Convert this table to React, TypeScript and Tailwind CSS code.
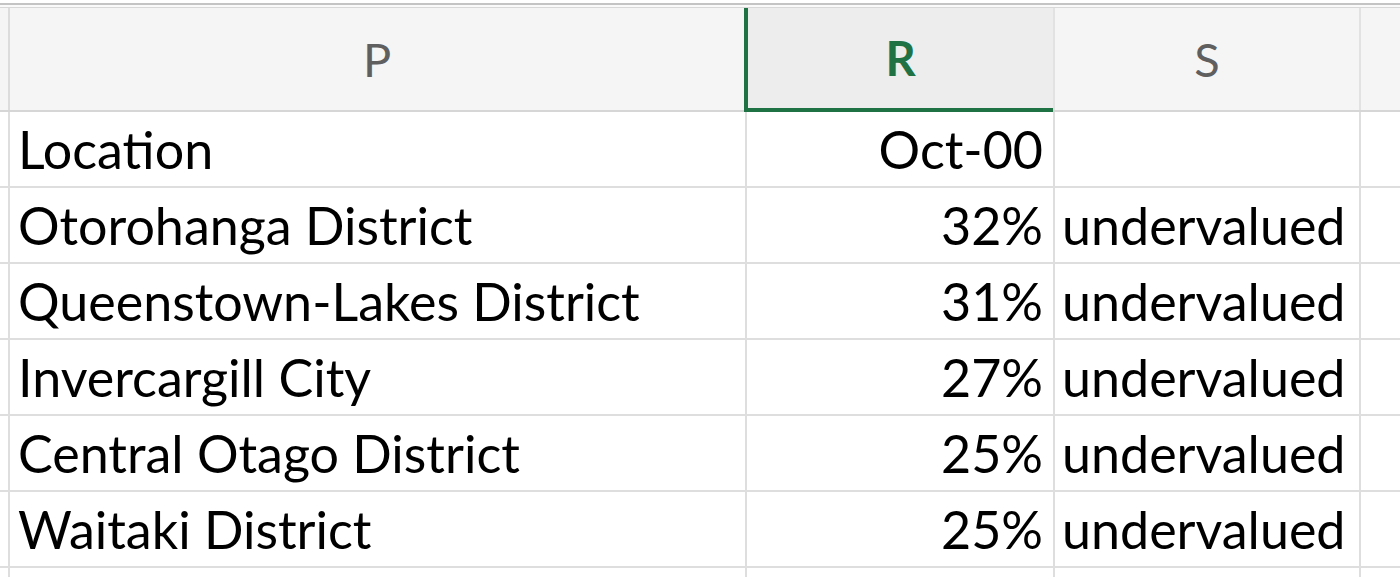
import React from "react";

// spreadsheet excerpt: columns P, R, S
const rows = [
  { loc: "Otorohanga District", pct: "32%" },
  { loc: "Queenstown-Lakes District", pct: "31%" },
  { loc: "Invercargill City", pct: "27%" },
  { loc: "Central Otago District", pct: "25%" },
  { loc: "Waitaki District", pct: "25%" },
];

const font = { fontFamily: "Lato, 'Open Sans', sans-serif" };

function Row({ a, b, c }: { a?: string; b?: string; c?: string }) {
  return (
    <div className="flex h-[76px] border-b-2 border-[#dedede] text-[52px] text-black">
      <div className="w-[8px] shrink-0" />
      <div className="w-[737px] shrink-0 border-l-2 border-[#dedede] pl-[8px] flex items-center whitespace-nowrap">
        {a}
      </div>
      <div className="w-[308px] shrink-0 border-l-2 border-[#dedede] pr-[10px] flex items-center justify-end whitespace-nowrap">
        {b}
      </div>
      <div className="w-[306px] shrink-0 border-l-2 border-[#dedede] pl-[7px] flex items-center whitespace-nowrap overflow-visible">
        {c}
      </div>
      <div className="flex-1 border-l-2 border-[#dedede]" />
    </div>
  );
}

export default function App() {
  return (
    <div className="w-[1400px] h-[577px] overflow-hidden bg-white" style={font}>
      <div className="h-[3px] bg-white" />
      <div className="h-[2px] bg-[#c4c4c4]" />
      <div className="h-[2px] bg-[#fafafa]" />
      <div className="h-px bg-[#d8d8d8]" />

      {/* column headers */}
      <div className="flex h-[104px] bg-[#f5f5f5] text-[47px] border-b-2 border-[#d6d6d6]">
        <div className="w-[8px] shrink-0" />
        <div className="w-[736px] shrink-0 border-l-2 border-[#dcdcdc] flex items-center justify-center text-[#5f5f5f]">
          P
        </div>
        <div className="w-[309px] shrink-0 -mb-[2px] bg-[#ededed] border-l-4 border-b-4 border-[#1f7244] flex items-center justify-center text-[#1f7244] font-bold">
          R
        </div>
        <div className="w-[306px] shrink-0 border-l-2 border-[#e2e2e2] flex items-center justify-center text-[#5f5f5f]">
          S
        </div>
        <div className="flex-1 border-l-2 border-[#e2e2e2]" />
      </div>

      <Row a="Location" b="Oct-00" />
      {rows.map((r) => (
        <Row key={r.loc} a={r.loc} b={r.pct} c="undervalued" />
      ))}
      <Row />
    </div>
  );
}
